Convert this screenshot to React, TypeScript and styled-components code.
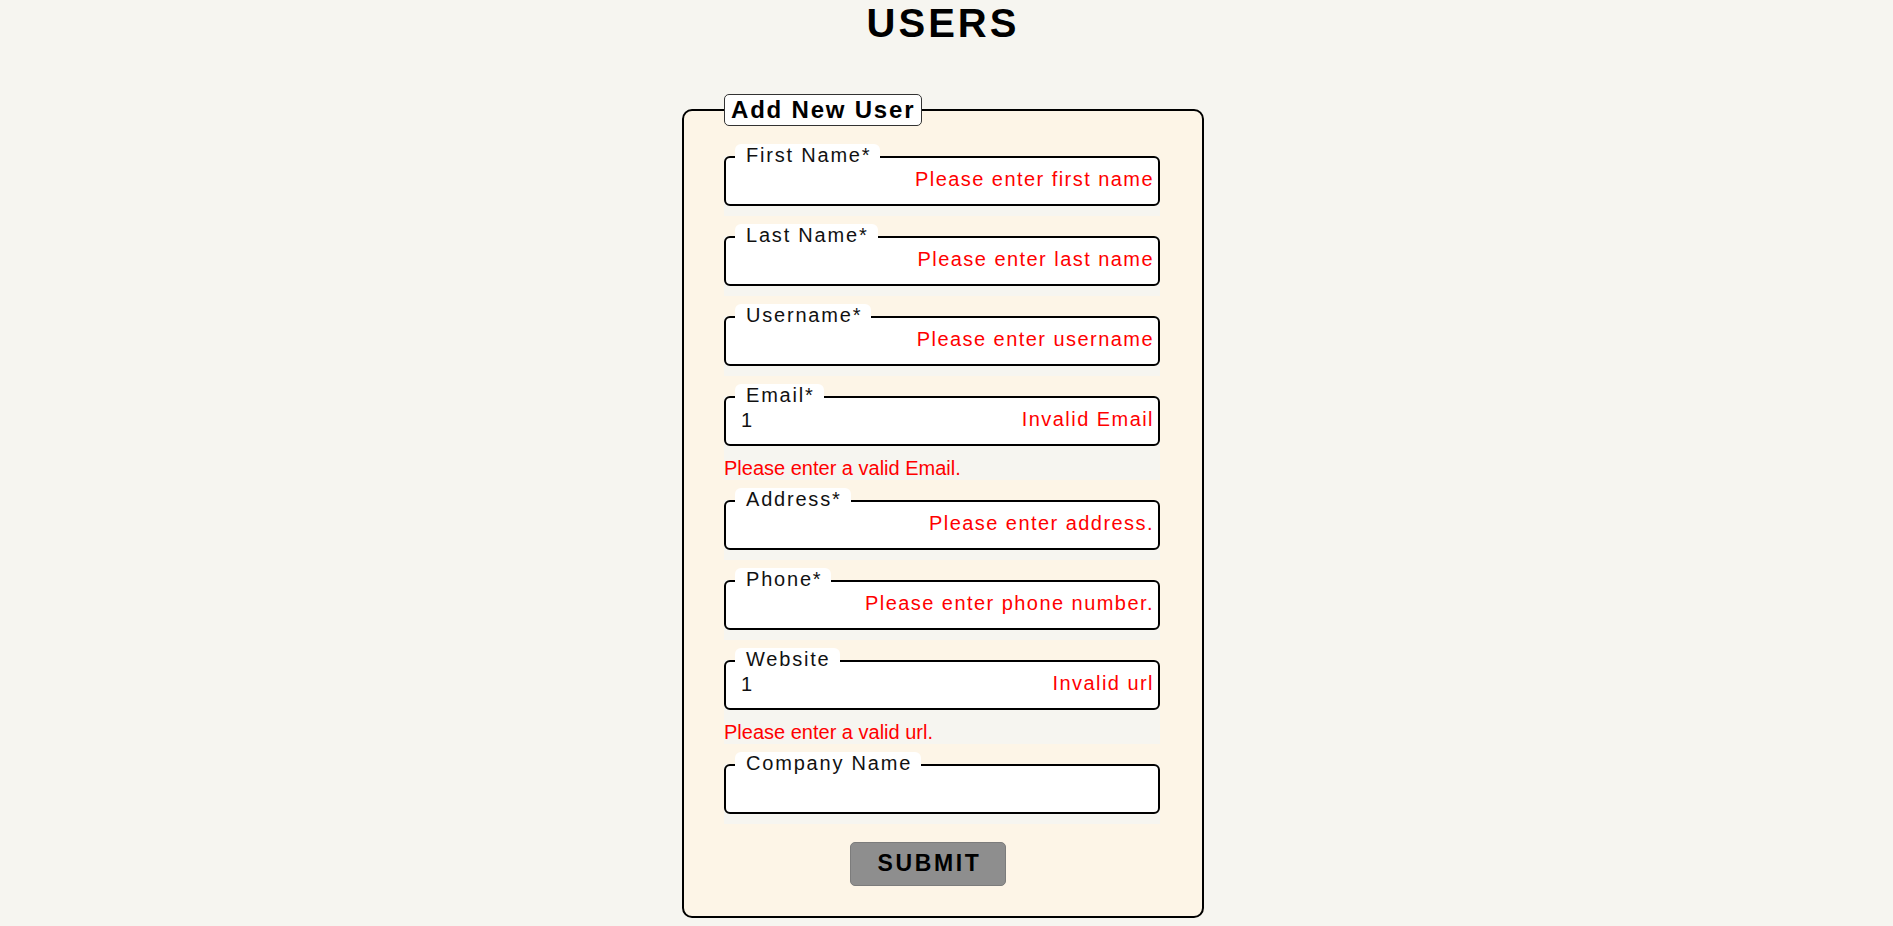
import React from "react";
import styled, { createGlobalStyle } from "styled-components";

const GlobalStyle = createGlobalStyle`
  html, body {
    margin: 0;
    padding: 0;
    background: #f6f5f0;
    font-family: "Liberation Sans", Arial, sans-serif;
    color: #000;
  }
`;

const Page = styled.div`
  display: flex;
  flex-direction: column;
  align-items: center;
  padding-right: 7px;
`;

const Title = styled.h1`
  margin: 0;
  font-size: 40px;
  line-height: 46px;
  font-weight: 700;
  letter-spacing: 3px;
`;

const Form = styled.form`
  margin-top: 48px;
`;

const FieldSet = styled.fieldset`
  margin: 0;
  width: 436px;
  padding: 30px 42px 30px 40px;
  border: 2px solid #000;
  border-radius: 10px;
  background: #fdf5e7;
`;

const Legend = styled.legend`
  padding: 1px 6px;
  background: #fff;
  border: 1px solid #333;
  border-radius: 5px;
  font-size: 24px;
  font-weight: 700;
  letter-spacing: 1.8px;
  line-height: 27.5px;
`;

const Fields = styled.div`
  display: flex;
  flex-direction: column;
  gap: 20px;
`;

const FieldGroup = styled.div`
  background: #f6f5f0;
`;

const InputBox = styled.div`
  position: relative;
`;

const Label = styled.label`
  position: absolute;
  top: -12px;
  left: 11px;
  padding: 0 9px 0 11px;
  background: #fff;
  border-radius: 6px;
  font-size: 20px;
  line-height: 23px;
  letter-spacing: 1.8px;
  color: #111;
`;

const Input = styled.input`
  display: block;
  width: 100%;
  height: 50px;
  box-sizing: border-box;
  margin: 0;
  padding: 0 15px;
  border: 2px solid #000;
  border-radius: 6px;
  background: #fff;
  font-family: "Liberation Sans", Arial, sans-serif;
  font-size: 20px;
  color: #111;
  outline: none;
`;

const InlineError = styled.span`
  position: absolute;
  right: 6px;
  top: 50%;
  transform: translateY(calc(-50% - 2px));
  font-size: 20px;
  line-height: 23px;
  letter-spacing: 1.45px;
  color: #ff0000;
  pointer-events: none;
`;

const Message = styled.div`
  padding-top: 10px;
  font-size: 20px;
  line-height: 24px;
  color: #ff0000;
`;

const ButtonRow = styled.div`
  display: flex;
  justify-content: center;
  padding-right: 28px;
  margin-top: 18px;
`;

const SubmitButton = styled.button`
  height: 44px;
  padding: 0 24px 0 27px;
  background: #8e8e8e;
  border: 1px solid #7c7c7c;
  border-radius: 5px;
  font-family: "Liberation Sans", Arial, sans-serif;
  font-size: 23px;
  font-weight: 700;
  letter-spacing: 2.6px;
  color: #000;
  cursor: pointer;
`;

type Field = {
  id: string;
  label: string;
  value: string;
  inline?: string;
  message?: string;
};

const fields: Field[] = [
  { id: "firstName", label: "First Name*", value: "", inline: "Please enter first name" },
  { id: "lastName", label: "Last Name*", value: "", inline: "Please enter last name" },
  { id: "username", label: "Username*", value: "", inline: "Please enter username" },
  { id: "email", label: "Email*", value: "1", inline: "Invalid Email", message: "Please enter a valid Email." },
  { id: "address", label: "Address*", value: "", inline: "Please enter address." },
  { id: "phone", label: "Phone*", value: "", inline: "Please enter phone number." },
  { id: "website", label: "Website", value: "1", inline: "Invalid url", message: "Please enter a valid url." },
  { id: "company", label: "Company Name", value: "" },
];

export default function App() {
  return (
    <>
      <GlobalStyle />
      <Page>
        <Title>USERS</Title>
        <Form onSubmit={(e) => e.preventDefault()}>
          <FieldSet>
            <Legend>Add New User</Legend>
            <Fields>
              {fields.map((f) => (
                <FieldGroup key={f.id}>
                  <InputBox>
                    <Input id={f.id} defaultValue={f.value} />
                    <Label htmlFor={f.id}>{f.label}</Label>
                    {f.inline && <InlineError>{f.inline}</InlineError>}
                  </InputBox>
                  <Message>{f.message ?? ""}</Message>
                </FieldGroup>
              ))}
            </Fields>
            <ButtonRow>
              <SubmitButton type="submit">SUBMIT</SubmitButton>
            </ButtonRow>
          </FieldSet>
        </Form>
      </Page>
    </>
  );
}
